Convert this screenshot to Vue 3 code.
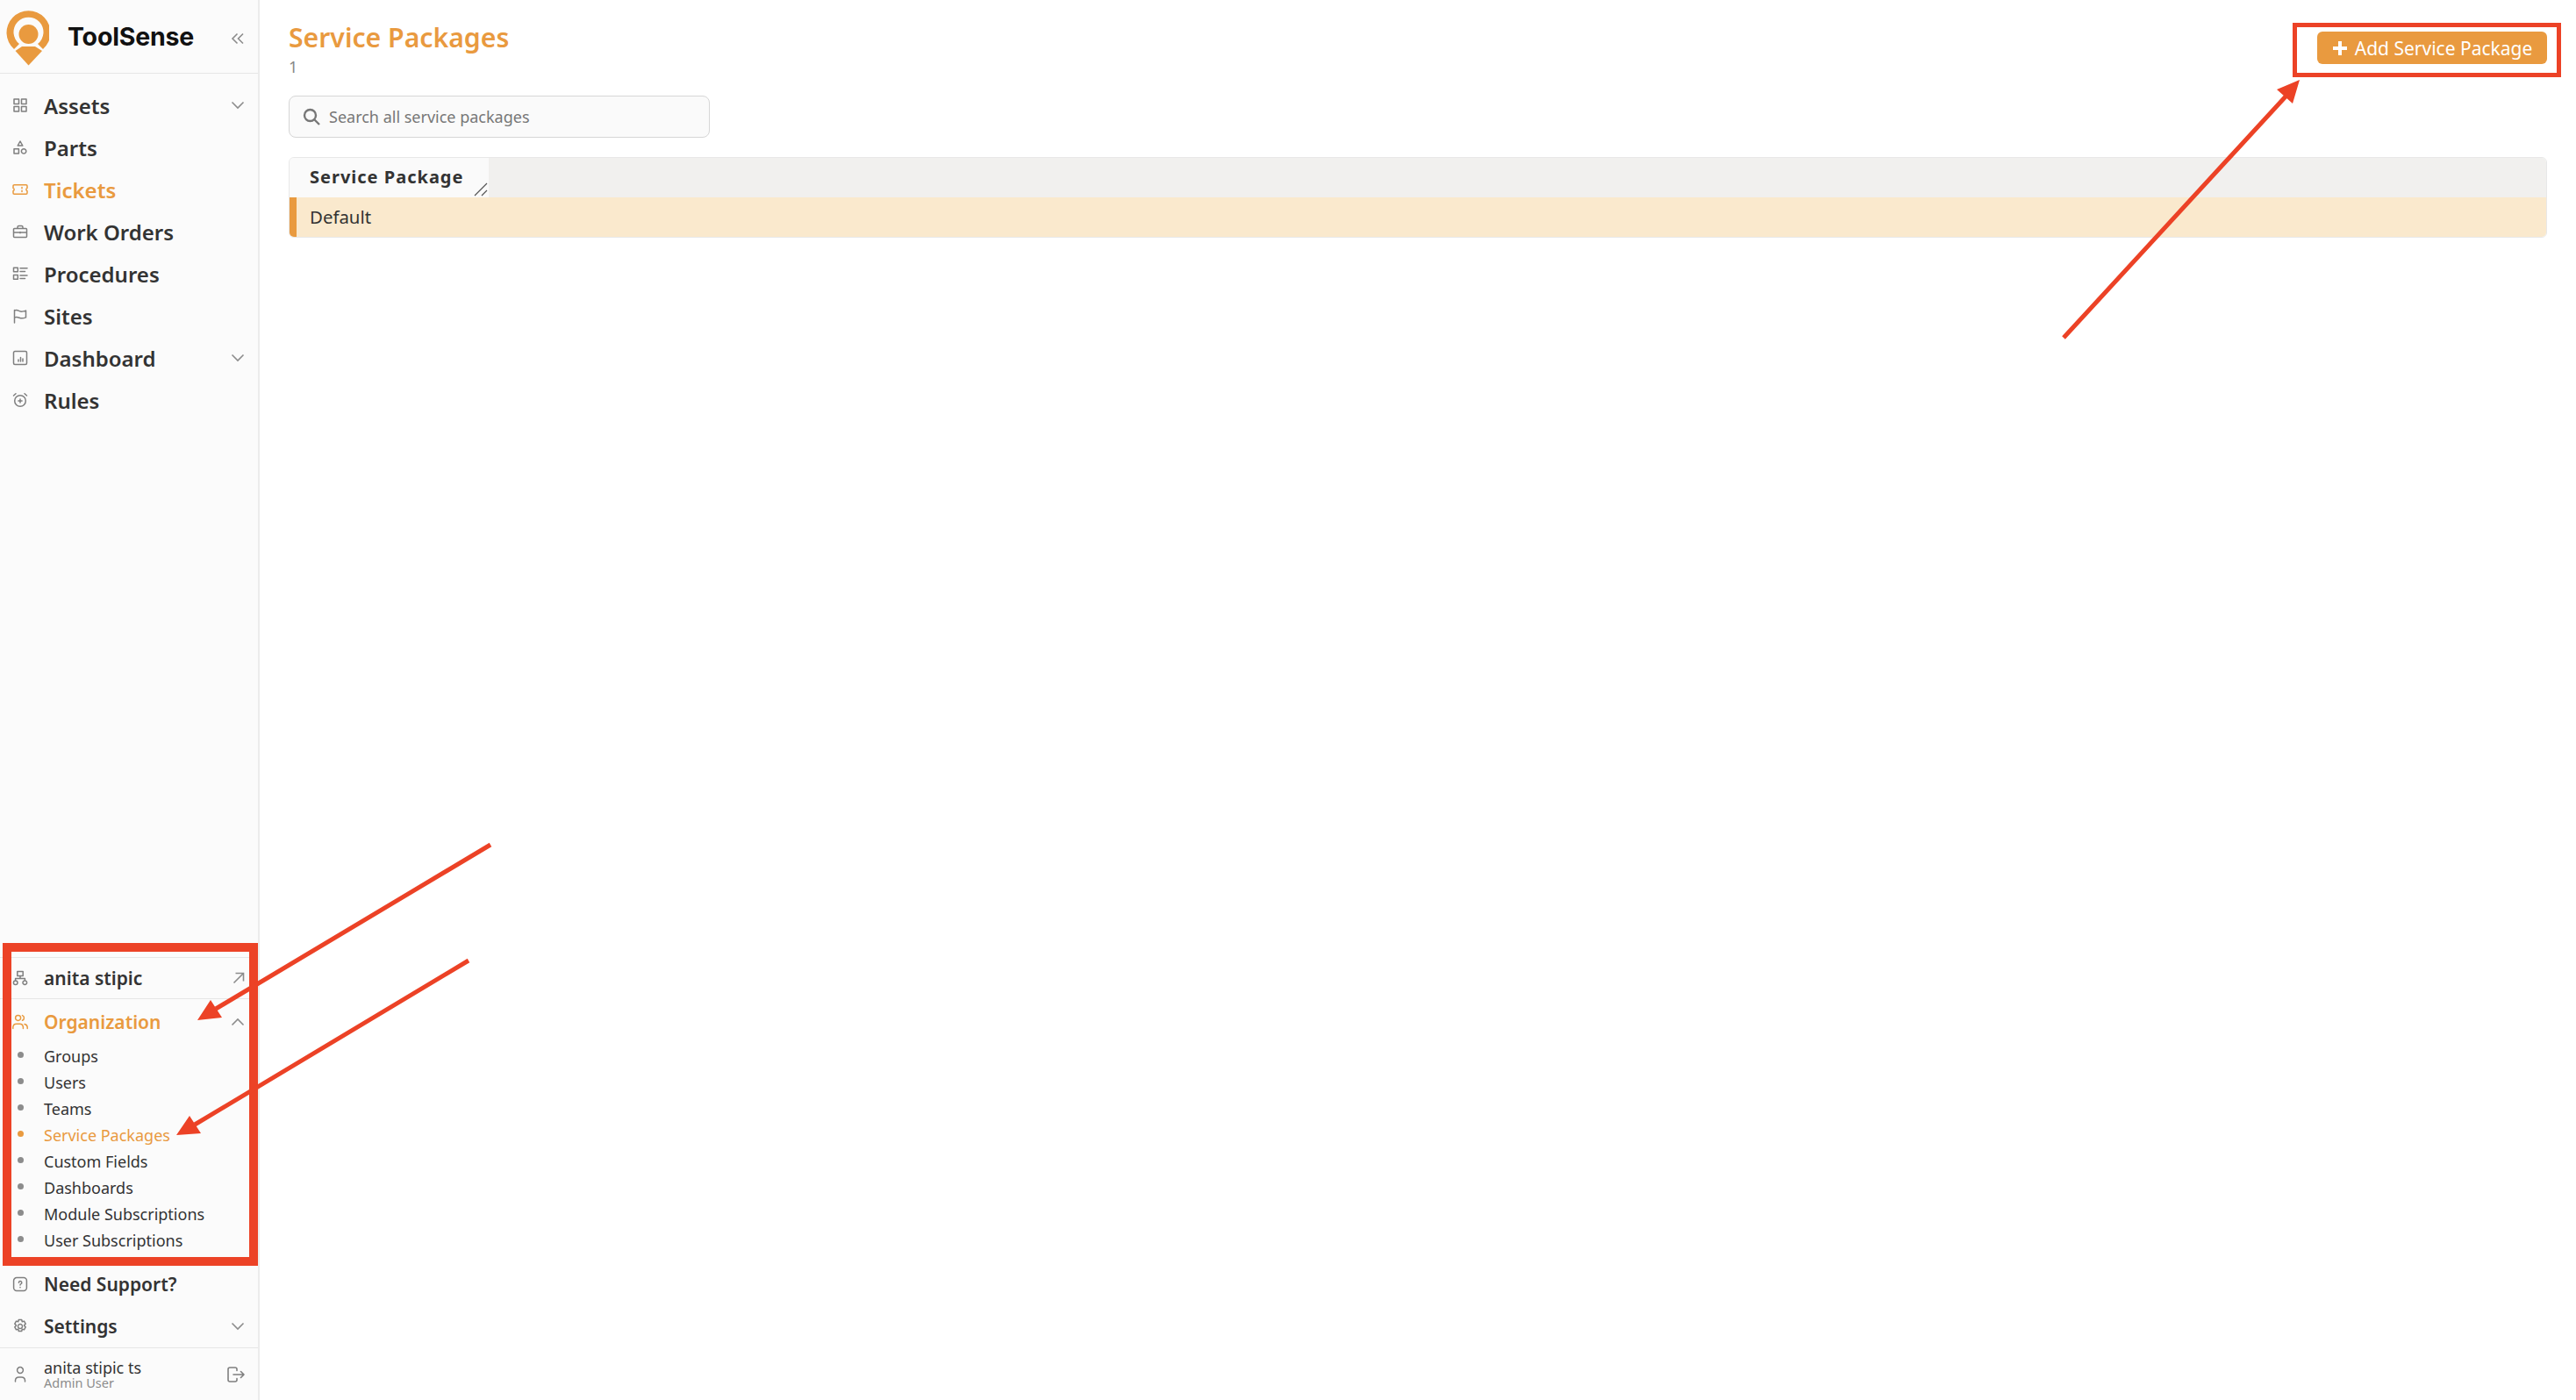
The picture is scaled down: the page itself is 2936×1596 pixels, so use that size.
<script setup>
const icons = {
  assets: 'M2 2h5.5v5.5H2z M10.5 2H16v5.5h-5.5z M2 10.5h5.5V16H2z M10.5 10.5H16V16h-5.5z',
  parts: 'M9 2l2.8 5H6.2z M2 10.8h5.4v5.2H2z M10.4 13.4a2.7 2.7 0 1 0 5.4 0a2.7 2.7 0 1 0-5.4 0',
  tickets: 'M2.2 3.8h13.6a1.2 1.2 0 0 1 1.2 1.2v2.4a1.7 1.7 0 0 0 0 3.2V13a1.2 1.2 0 0 1-1.2 1.2H2.2A1.2 1.2 0 0 1 1 13v-2.4a1.7 1.7 0 0 0 0-3.2V5a1.2 1.2 0 0 1 1.2-1.2z M11 6.4v1.4 M11 10.2v1.4',
  orders: 'M2.5 5.5h13a1 1 0 0 1 1 1v8a1 1 0 0 1-1 1h-13a1 1 0 0 1-1-1v-8a1 1 0 0 1 1-1z M6 5.5V4a1.5 1.5 0 0 1 1.5-1.5h3A1.5 1.5 0 0 1 12 4v1.5 M1.5 10h15 M9 9.4v1.4',
  procedures: 'M1.5 2.2h4.8v4.6H1.5z M1.5 10.6h4.8v4.6H1.5z M9 2.8h8 M9 6.4h5.5 M9 11h8 M9 14.6h5.5',
  sites: 'M2.5 17V2.6 M2.5 3c3-1.4 5 .7 7 1.1 2 .4 4-.3 6-1v7.8c-2 .8-4 1.2-6 .8s-4-1.9-7-.7',
  dashboard: 'M3 1.5h12a1.5 1.5 0 0 1 1.5 1.5v12a1.5 1.5 0 0 1-1.5 1.5H3A1.5 1.5 0 0 1 1.5 15V3A1.5 1.5 0 0 1 3 1.5z M7 13v-2 M9.5 13V8.5 M12 13v-3',
  rules: 'M2.7 10a6.3 6.3 0 1 0 12.6 0a6.3 6.3 0 1 0-12.6 0 M1.5 4L4 1.8 M16.5 4L14 1.8 M9 7.9v4.2 M6.9 10h4.2',
  network: 'M5.8 1.5h6.4v5H5.8z M9 6.5v3 M3.6 11.8V9.5h10.8v2.3 M1.4 14.2a2.3 2.3 0 1 0 4.6 0a2.3 2.3 0 1 0-4.6 0 M12 14.2a2.3 2.3 0 1 0 4.6 0a2.3 2.3 0 1 0-4.6 0',
  people: 'M3.6 4.4a3 3 0 1 0 6 0a3 3 0 1 0-6 0 M.8 16.5v-1.6a4 4 0 0 1 4-3.6h3.6a4 4 0 0 1 4 3.6v1.6 M11.5 1.6a3 3 0 0 1 0 5.6 M14 11.6a4 4 0 0 1 3.2 3.4v1.500',
  support: 'M5 1.6h8a3.4 3.4 0 0 1 3.4 3.4v8a3.4 3.4 0 0 1-3.4 3.4H5A3.4 3.4 0 0 1 1.6 13V5A3.4 3.4 0 0 1 5 1.6z M7.4 7.2a1.7 1.7 0 1 1 2.5 1.5c-.6.3-.9.7-.9 1.3 M9 12.4v.3',
  settings: 'M7.3 1.5h3.4l.6 2.2 2.2-.6 1.7 3-1.6 1.6v.6l1.6 1.6-1.7 3-2.2-.6-.6 2.2H7.3l-.6-2.2-2.2.6-1.7-3 1.6-1.6v-.6L2.8 6.100l1.700-3 2.200.6z M6.5 9a2.5 2.5 0 1 0 5 0a2.5 2.5 0 1 0-5 0'
}

const mainNav = [
  { label: 'Assets', icon: 'assets', chevron: true },
  { label: 'Parts', icon: 'parts' },
  { label: 'Tickets', icon: 'tickets', active: true },
  { label: 'Work Orders', icon: 'orders' },
  { label: 'Procedures', icon: 'procedures' },
  { label: 'Sites', icon: 'sites' },
  { label: 'Dashboard', icon: 'dashboard', chevron: true },
  { label: 'Rules', icon: 'rules' }
]

const orgLinks = ['Groups', 'Users', 'Teams', 'Service Packages', 'Custom Fields', 'Dashboards', 'Module Subscriptions', 'User Subscriptions']
</script>

<template>
  <div class="page">
    <aside class="sidebar">
      <div class="brand">
        <svg class="logo" width="56" height="76" viewBox="0 0 56 76">
          <path d="M16 53 A25 25 0 1 1 49 53 L43 47 A17 17 0 1 0 22 47 Z" fill="#e99a3f" />
          <circle cx="32.5" cy="36" r="11" fill="#e99a3f" />
          <path d="M17.5 55 L25 50 H40 L48 55 L32.5 71.5 Z" fill="#e99a3f" />
        </svg>
        <span class="brand-name">ToolSense</span>
        <svg class="collapse" width="16" height="16" viewBox="0 0 16 16">
          <path d="M7.5 2.5L2 8l5.5 5.5 M14 2.5L8.5 8l5.5 5.5" />
        </svg>
      </div>

      <nav class="nav">
        <a v-for="item in mainNav" :key="item.label" class="nav-row" :class="{ active: item.active }">
          <svg class="icon" width="18" height="18" viewBox="0 0 18 18"><path :d="icons[item.icon]" /></svg>
          <span class="nav-label">{{ item.label }}</span>
          <svg v-if="item.chevron" class="chevron" width="16" height="10" viewBox="0 0 16 10"><path d="M1.5 1.5L8 8l6.5-6.5" /></svg>
        </a>
      </nav>

      <div class="bottom">
        <a class="nav-row tenant">
          <svg class="icon" width="18" height="18" viewBox="0 0 18 18"><path :d="icons.network" /></svg>
          <span class="nav-label">anita stipic</span>
          <svg class="chevron" width="14" height="14" viewBox="0 0 14 14"><path d="M1.5 12.5L12.5 1.5 M3.5 1.5h9v9" /></svg>
        </a>
        <a class="nav-row active">
          <svg class="icon" width="18" height="18" viewBox="0 0 18 18"><path :d="icons.people" /></svg>
          <span class="nav-label">Organization</span>
          <svg class="chevron up" width="16" height="10" viewBox="0 0 16 10"><path d="M1.5 8.5L8 2l6.5 6.5" /></svg>
        </a>
        <ul class="sub-list">
          <li v-for="link in orgLinks" :key="link" :class="{ active: link === 'Service Packages' }">
            <span class="dot"></span>{{ link }}
          </li>
        </ul>
        <a class="nav-row">
          <svg class="icon" width="18" height="18" viewBox="0 0 18 18"><path :d="icons.support" /></svg>
          <span class="nav-label">Need Support?</span>
        </a>
        <a class="nav-row">
          <svg class="icon" width="18" height="18" viewBox="0 0 18 18"><path :d="icons.settings" /></svg>
          <span class="nav-label">Settings</span>
          <svg class="chevron" width="16" height="10" viewBox="0 0 16 10"><path d="M1.5 1.5L8 8l6.5-6.5" /></svg>
        </a>
        <div class="account">
          <svg class="icon" width="18" height="20" viewBox="0 0 18 20">
            <path d="M5.6 5a3.4 3.4 0 1 0 6.8 0a3.4 3.4 0 1 0-6.8 0 M3.5 18v-1.5a4 4 0 0 1 4-3.5h3a4 4 0 0 1 4 3.5V18" />
          </svg>
          <div class="account-text">
            <div class="account-name">anita stipic ts</div>
            <div class="account-role">Admin User</div>
          </div>
          <svg class="logout" width="20" height="18" viewBox="0 0 20 18">
            <path d="M11 4.5V3a2 2 0 0 0-2-2H3a2 2 0 0 0-2 2v12a2 2 0 0 0 2 2h6a2 2 0 0 0 2-2v-1.5 M7 9h12 M15.5 5.5L19 9l-3.500 3.500" />
          </svg>
        </div>
      </div>
    </aside>

    <main class="main">
      <header class="top">
        <div>
          <h1 class="title">Service Packages</h1>
          <div class="count">1</div>
        </div>
        <button class="add-btn">
          <svg width="18" height="18" viewBox="0 0 18 18"><path d="M9 1v16 M1 9h16" /></svg>
          Add Service Package
        </button>
      </header>

      <div class="search">
        <svg width="20" height="20" viewBox="0 0 20 20"><path d="M2 8.500a6.500 6.500 0 1 0 13 0a6.500 6.500 0 1 0-13 0 M13.500 13.500L19 19" /></svg>
        <span>Search all service packages</span>
      </div>

      <div class="table">
        <div class="table-head">
          <div class="th">
            Service Package
            <svg class="resize" width="16" height="16" viewBox="0 0 16 16"><path d="M1 15L15 1 M9 15l6-6" /></svg>
          </div>
        </div>
        <div class="table-row">Default</div>
      </div>
    </main>

    <svg class="marks" width="2936" height="1596" viewBox="0 0 2936 1596">
      <rect x="8" y="1080" width="281" height="358" fill="none" stroke="#ec4226" stroke-width="10" />
      <rect x="2615.500" y="28.500" width="301" height="57" fill="none" stroke="#ec4226" stroke-width="5" />
      <path d="M2352 385L2606 109 M559 963L246 1150 M534 1095L222 1282" stroke="#ec4226" stroke-width="5" fill="none" />
      <path d="M2621 91L2595 102L2613 118Z M225 1163L240 1140L253 1160Z M201 1294L216 1272L229 1292Z" fill="#ec4226" />
    </svg>
  </div>
</template>

<style scoped>
.page {
  position: relative;
  display: flex;
  width: 2936px;
  height: 1596px;
  overflow: hidden;
  background: #fff;
  font-family: "Noto Sans", sans-serif;
  color: #333;
}

/* Sidebar */
.sidebar {
  display: flex;
  flex-direction: column;
  width: 296px;
  flex-shrink: 0;
  box-sizing: border-box;
  background: #fbfbfb;
  border-right: 2px solid #ececec;
}

.brand {
  display: flex;
  align-items: center;
  height: 83px;
  flex-shrink: 0;
  border-bottom: 1px solid #e6e6e6;
}

.logo {
  flex-shrink: 0;
  margin-top: -1px;
  width: 56px;
}

.brand-name {
  margin-left: 21px;
  font-family: Inter, sans-serif;
  font-size: 28.5px;
  font-weight: 700;
  letter-spacing: -0.2px;
  color: #111;
}

.collapse {
  margin-left: auto;
  margin-right: 15px;
  margin-top: 4px;
  fill: none;
  stroke: #8c8c8c;
  stroke-width: 1.6;
}

.nav {
  padding-top: 12px;
}

.nav-row {
  display: flex;
  align-items: center;
  height: 48px;
  padding: 0 15px 0 14px;
  font-size: 24px;
  font-weight: 600;
  color: #333;
}

.bottom .nav-row {
  font-size: 21px;
}

.nav-label {
  margin-left: 18px;
}

.nav-row.active {
  color: #e99a3f;
}

.icon {
  flex-shrink: 0;
  fill: none;
  stroke: #7f7f7f;
  stroke-width: 1.5;
  stroke-linejoin: round;
  stroke-linecap: round;
}

.nav-row.active .icon {
  stroke: #e99a3f;
}

.chevron {
  margin-left: auto;
  fill: none;
  stroke: #8c8c8c;
  stroke-width: 1.6;
}

.bottom {
  margin-top: auto;
}

.tenant {
  height: 46px;
  border-top: 1px solid #e6e6e6;
  border-bottom: 1px solid #e6e6e6;
  margin-bottom: 2px;
}

.sub-list {
  list-style: none;
  margin: 0;
  padding: 0 0 11px;
}

.sub-list li {
  display: flex;
  align-items: center;
  height: 30px;
  font-size: 18px;
  color: #333;
}

.sub-list li.active {
  color: #e99a3f;
}

.dot {
  width: 7px;
  height: 7px;
  margin: -4px 23px 0 20px;
  border-radius: 50%;
  background: #8c8c8c;
}

.sub-list li.active .dot {
  background: #e99a3f;
}

.account {
  display: flex;
  align-items: center;
  height: 59px;
  padding: 0 15px 0 14px;
  border-top: 1px solid #e6e6e6;
}

.account-text {
  margin-left: 18px;
  line-height: 1;
}

.account-name {
  font-size: 18px;
  color: #333;
}

.account-role {
  margin-top: 1px;
  font-size: 14.5px;
  color: #8c8c8c;
}

.logout {
  margin-left: auto;
  fill: none;
  stroke: #7f7f7f;
  stroke-width: 1.6;
  stroke-linecap: round;
  stroke-linejoin: round;
}

/* Main area */
.main {
  flex: 1;
  min-width: 0;
  padding: 0 33px;
}

.top {
  display: flex;
  justify-content: space-between;
  align-items: flex-start;
  height: 109px;
}

.title {
  margin: 21px 0 0;
  font-size: 30.2px;
  font-weight: 600;
  line-height: 44px;
  color: #e99a3f;
}

.count {
  font-size: 18px;
  line-height: 22px;
  color: #888;
}

.add-btn {
  display: flex;
  align-items: center;
  justify-content: center;
  gap: 8px;
  width: 262px;
  height: 37px;
  margin-top: 36px;
  padding: 0;
  border: none;
  border-radius: 6px;
  background: #e99a3f;
  color: #fff;
  font-family: inherit;
  font-size: 21px;
}

.add-btn svg {
  fill: none;
  stroke: #fff;
  stroke-width: 4;
}

.search {
  display: flex;
  align-items: center;
  gap: 10px;
  box-sizing: border-box;
  width: 480px;
  height: 48px;
  padding-left: 15px;
  border: 1px solid #d6d6d6;
  border-radius: 8px;
  background: #fafafa;
  font-size: 18px;
  color: #777;
}

.search svg {
  flex-shrink: 0;
  fill: none;
  stroke: #777;
  stroke-width: 2.4;
}

.table {
  margin-top: 22px;
  border: 1px solid #e8e8e8;
  border-radius: 6px;
  overflow: hidden;
}

.table-head {
  display: flex;
  height: 45px;
  background: #f1f0ee;
}

.th {
  position: relative;
  box-sizing: border-box;
  width: 227px;
  padding-left: 23px;
  background: #fafafa;
  font-size: 20px;
  font-weight: 700;
  line-height: 44px;
  letter-spacing: 1px;
  color: #333;
}

.resize {
  position: absolute;
  right: 1px;
  bottom: 1px;
  fill: none;
  stroke: #555;
  stroke-width: 1.2;
}

.table-row {
  box-sizing: border-box;
  height: 45px;
  padding-left: 15px;
  border-left: 8px solid #e99a3f;
  background: #fae9cd;
  font-size: 20.4px;
  line-height: 44px;
  color: #333;
}

/* Annotation layer drawn over the page */
.marks {
  position: absolute;
  top: 0;
  left: 0;
  pointer-events: none;
}
</style>

<style>
html,
body {
  background: #fff;
}
</style>
